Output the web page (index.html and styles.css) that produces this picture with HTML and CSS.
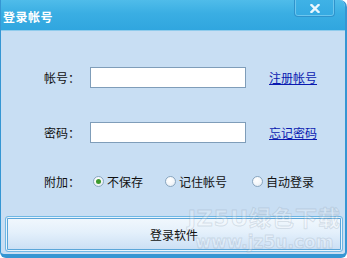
FILE: index.html
```html
<!DOCTYPE html>
<html lang="zh-CN">
<head>
<meta charset="utf-8">
<title>登录帐号</title>
<link rel="stylesheet" href="styles.css">
</head>
<body>
<div class="window">
  <div class="titlebar">
    <span class="title">登录帐号</span>
    <button class="close" aria-label="关闭">
      <svg width="10" height="9" viewBox="0 0 10 9"><path d="M1.5 1 L8.5 8 M8.5 1 L1.5 8" stroke="#eaf6fd" stroke-width="2.4" stroke-linecap="square"/></svg>
    </button>
  </div>
  <div class="content">
    <div class="row first">
      <span class="label">帐号：</span>
      <input class="field" type="text">
      <a class="link" href="#">注册帐号</a>
    </div>
    <div class="row second">
      <span class="label">密码：</span>
      <input class="field" type="password">
      <a class="link" href="#">忘记密码</a>
    </div>
    <div class="row third">
      <span class="label">附加：</span>
      <div class="radios">
        <label class="radio"><span class="dot checked"></span>不保存</label>
        <label class="radio"><span class="dot"></span>记住帐号</label>
        <label class="radio last"><span class="dot"></span>自动登录</label>
      </div>
    </div>
    <button class="login">登录软件</button>
  </div>
  <div class="watermark"><div class="wm1">JZ5U绿色下载</div><div class="wm2">www.jz5u.com</div></div>
</div>
</body>
</html>
```
FILE: styles.css
```css
* { box-sizing: border-box; }
html, body { margin: 0; padding: 0; }
body {
  width: 347px;
  height: 258px;
  overflow: hidden;
  font-family: "Noto Sans CJK SC", "DejaVu Sans", sans-serif;
  font-size: 12px;
  color: #111;
}
.window {
  position: relative;
  width: 347px;
  height: 258px;
  display: flex;
  flex-direction: column;
  background: #c8def3;
  border-right: 2px solid #3596d3;
  border-bottom: 4px solid #3596d3;
  border-left: 1px solid #3596d3;
  border-radius: 0 7px 6px 6px;
  overflow: hidden;
}
.titlebar {
  height: 31px;
  flex: none;
  display: flex;
  align-items: flex-start;
  justify-content: space-between;
  background: linear-gradient(#4fbcea, #3aaee3 45%, #30a6df);
  border-bottom: 1px solid #8fcbec;
}
.title {
  margin: 9px 0 0 2px;
  color: #fff;
  font-weight: bold;
  font-size: 12px;
  line-height: 16px;
  letter-spacing: 0.5px;
}
.close {
  width: 41px;
  height: 17px;
  margin-right: 10px;
  padding: 0;
  border: 1px solid #2f93cc;
  border-top: none;
  border-radius: 0 0 4px 4px;
  background: linear-gradient(#3fb2e6, #35aae2);
  box-shadow: inset 1px 0 0 #6cc6ee, inset -1px 0 0 #6cc6ee, inset 0 -1px 0 #6cc6ee;
  display: flex;
  align-items: center;
  justify-content: center;
}
.content {
  flex: 1;
  display: flex;
  flex-direction: column;
  padding: 36px 0 0 2px;
}
.row {
  display: flex;
  align-items: center;
  height: 21px;
}
.second { margin-top: 34px; }
.third { margin-top: 28px; }
.label {
  width: 46px;
  padding-left: 41px;
  box-sizing: content-box;
  flex: none;
  line-height: 16px;
}
.field {
  width: 156px;
  height: 21px;
  margin: 0;
  border: 1px solid #7f9db9;
  background: #fff;
  flex: none;
}
.link {
  margin-left: 23px;
  color: #0a1ab0;
  text-decoration: underline;
  line-height: 16px;
}
.radios {
  display: flex;
  align-items: center;
  gap: 22px;
  margin-left: 3px;
}
.radio {
  display: flex;
  align-items: center;
  gap: 3px;
  line-height: 16px;
}
.radio.last { margin-left: 3px; }
.dot {
  width: 11px;
  height: 11px;
  border-radius: 50%;
  border: 1px solid #8aa6bf;
  background: radial-gradient(circle at 40% 35%, #ffffff 0%, #f4f7fa 50%, #d8e2ec 100%);
  display: flex;
  align-items: center;
  justify-content: center;
}
.dot.checked::after {
  content: "";
  width: 5px;
  height: 5px;
  border-radius: 50%;
  background: #3d9a2e;
}
.login {
  margin: 24px 2px 0 2px;
  height: 36px;
  border: 1px solid #6fb7e4;
  border-radius: 3px;
  background: linear-gradient(#f2f8fd, #e4f0fb 45%, #c9def4);
  box-shadow: inset 0 0 0 1px #e9f4fc, inset 0 0 0 2px #5ba6d9;
  font-family: "Noto Sans CJK SC", "DejaVu Sans", sans-serif;
  font-size: 12px;
  color: #111;
  padding: 0;
}
.watermark {
  position: absolute;
  right: 4px;
  bottom: 1px;
  text-align: center;
  color: rgba(255, 255, 255, 0.22);
  -webkit-text-stroke: 1px rgba(120, 140, 160, 0.22);
  font-family: "DejaVu Sans", "Noto Sans CJK SC", sans-serif;
  font-weight: bold;
  pointer-events: none;
}
.wm1 { font-size: 22px; line-height: 25px; letter-spacing: 1px; }
.wm2 { font-size: 17px; line-height: 22px; }
```
